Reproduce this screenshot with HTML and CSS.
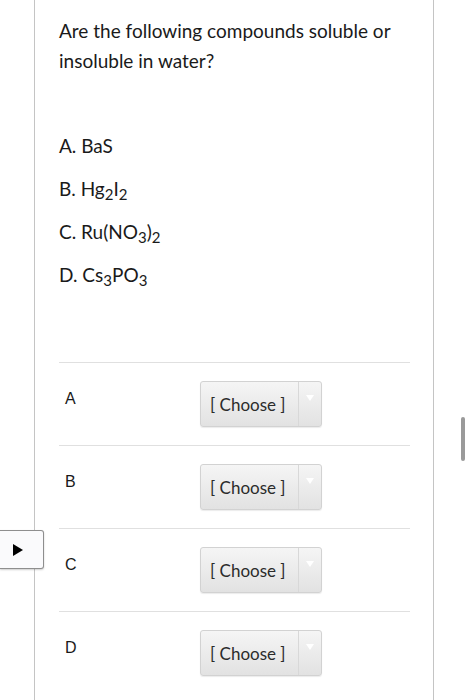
FILE: index.html
```html
<!DOCTYPE html>
<html>
<head>
<meta charset="utf-8">
<link rel="stylesheet" href="styles.css">
</head>
<body>
<div class="card">
  <p class="question">Are the following compounds soluble or insoluble in water?</p>
  <div class="options">
    <p class="opt">A. BaS</p>
    <p class="opt">B. Hg<sub>2</sub>I<sub>2</sub></p>
    <p class="opt">C. Ru(NO<sub>3</sub>)<sub>2</sub></p>
    <p class="opt">D. Cs<sub>3</sub>PO<sub>3</sub></p>
  </div>
  <div class="answers">
    <div class="row">
      <span class="label">A</span>
      <div class="select"><span class="sel-text">[ Choose ]</span><span class="sel-arrow"><span class="tri"></span></span></div>
    </div>
    <div class="row">
      <span class="label">B</span>
      <div class="select"><span class="sel-text">[ Choose ]</span><span class="sel-arrow"><span class="tri"></span></span></div>
    </div>
    <div class="row">
      <span class="label">C</span>
      <div class="select"><span class="sel-text">[ Choose ]</span><span class="sel-arrow"><span class="tri"></span></span></div>
    </div>
    <div class="row">
      <span class="label">D</span>
      <div class="select"><span class="sel-text">[ Choose ]</span><span class="sel-arrow"><span class="tri"></span></span></div>
    </div>
  </div>
</div>
<div class="toggle"><span class="play"></span></div>
<div class="scrollbar"></div>
</body>
</html>
```
FILE: styles.css
```css
html, body {
  margin: 0;
  padding: 0;
  background: #ffffff;
  height: 700px;
  overflow: hidden;
}
body {
  font-family: Lato, "Open Sans", sans-serif;
  color: #1a1a1a;
  position: relative;
}
.card {
  box-sizing: border-box;
  margin-left: 34px;
  width: 400px;
  height: 700px;
  border-left: 1px solid #c4c4c4;
  border-right: 1px solid #c4c4c4;
  padding: 16px 23px 0 24px;
}
.question {
  margin: 0;
  font-size: 19px;
  line-height: 30px;
  color: #1a1a1a;
}
.options {
  margin-top: 48px;
}
.opt {
  margin: 0;
  font-size: 19px;
  line-height: 43px;
  color: #1a1a1a;
}
.opt sub {
  font-size: 15px;
  line-height: 0;
  vertical-align: -4px;
}
.answers {
  margin-top: 66px;
}
.row {
  box-sizing: border-box;
  display: flex;
  align-items: flex-start;
  border-top: 1px solid #e0e0e0;
  height: 83px;
  padding-top: 18px;
}
.label {
  box-sizing: border-box;
  width: 141px;
  padding-left: 6px;
  font-family: "Liberation Sans", Arial, sans-serif;
  font-size: 16px;
  line-height: 20px;
  margin-top: 8px;
  color: #1a1a1a;
}
.select {
  box-sizing: border-box;
  width: 122px;
  height: 46px;
  display: flex;
  border: 1px solid #d2d2d2;
  border-radius: 3px;
  background: linear-gradient(#f5f5f5, #e2e2e2);
  box-shadow: 0 1px 1px rgba(0,0,0,0.08);
}
.sel-text {
  flex: 1;
  display: flex;
  align-items: center;
  padding-left: 9px;
  font-size: 17px;
  color: #2b2b2b;
}
.sel-arrow {
  width: 23px;
  border-left: 1px solid #d8d8d8;
  display: flex;
  justify-content: center;
  padding-top: 13px;
  box-sizing: border-box;
}
.tri {
  width: 0;
  height: 0;
  border-left: 4px solid transparent;
  border-right: 4px solid transparent;
  border-top: 6px solid #ffffff;
}
.toggle {
  position: absolute;
  left: 0;
  top: 530px;
  box-sizing: border-box;
  width: 44px;
  height: 39px;
  background: #fafafc;
  border: 1px solid #8e8e8e;
  border-left: none;
  border-radius: 0 3px 3px 0;
  box-shadow: 0 1px 2px rgba(0,0,0,0.2);
  display: flex;
  align-items: center;
  padding-left: 13px;
}
.play {
  width: 0;
  height: 0;
  border-top: 6px solid transparent;
  border-bottom: 6px solid transparent;
  border-left: 10px solid #000000;
}
.scrollbar {
  position: absolute;
  left: 461px;
  top: 417px;
  width: 4px;
  height: 44px;
  border-radius: 2px;
  background: #9a9a9a;
}
```
